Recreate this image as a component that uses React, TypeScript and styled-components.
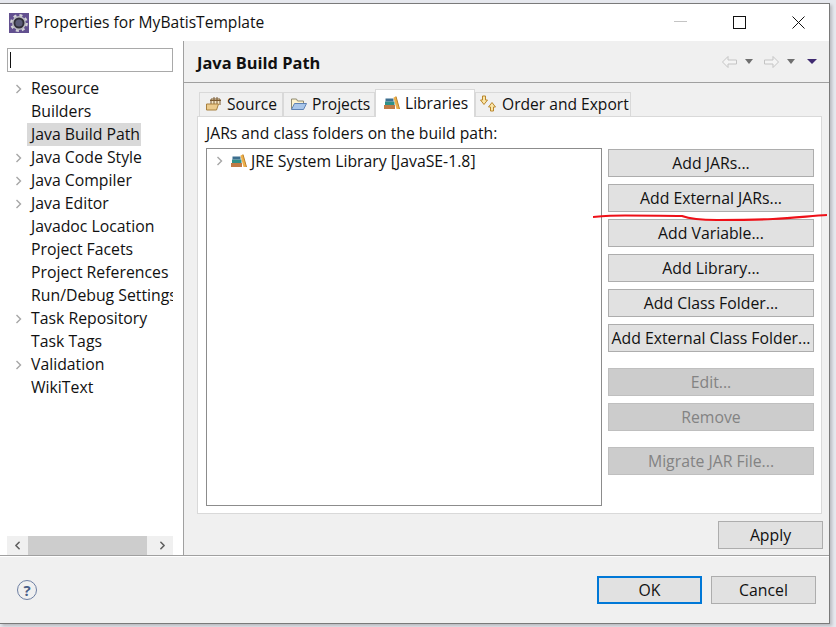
import React from 'react';
import styled, { createGlobalStyle } from 'styled-components';
import { ChevronLeft, ChevronRight } from 'lucide-react';

const treeItems = [
  { label: 'Resource', arrow: true },
  { label: 'Builders', arrow: false },
  { label: 'Java Build Path', arrow: false, selected: true },
  { label: 'Java Code Style', arrow: true },
  { label: 'Java Compiler', arrow: true },
  { label: 'Java Editor', arrow: true },
  { label: 'Javadoc Location', arrow: false },
  { label: 'Project Facets', arrow: false },
  { label: 'Project References', arrow: false },
  { label: 'Run/Debug Settings', arrow: false },
  { label: 'Task Repository', arrow: true },
  { label: 'Task Tags', arrow: false },
  { label: 'Validation', arrow: true },
  { label: 'WikiText', arrow: false },
];

const Arrow = () => (
  <svg width="7" height="10" viewBox="0 0 7 10">
    <path d="M1.5 1l4 4-4 4" fill="none" stroke="#a6a6a6" strokeWidth="1.4" />
  </svg>
);

const LibraryIcon = () => (
  <svg width="16" height="14" viewBox="0 0 16 14">
    <rect x="0" y="9" width="11" height="4" fill="#c07a45" />
    <rect x="1" y="5.5" width="9.5" height="3.5" fill="#2f9088" />
    <rect x="1.5" y="2.5" width="8" height="3" fill="#3d6f8f" />
    <path d="M9.5 1.5L12 .5l3.5 12.5h-3z" fill="#eeb04a" />
    <path d="M12 .5l3.5 12.5" stroke="#b97f2a" fill="none" />
  </svg>
);

const SourceIcon = () => (
  <svg width="16" height="15" viewBox="0 0 16 15">
    <path d="M5 8V3h9v6" fill="#f6e7c8" stroke="#7a5a30" />
    <path d="M8 1v7M11 1v7M4 4.5h11" stroke="#7a5a30" fill="none" />
    <path d="M.5 8h12l-2 6H.5z" fill="#eccb8c" stroke="#a8803f" />
  </svg>
);

const FolderIcon = () => (
  <svg width="16" height="14" viewBox="0 0 16 14">
    <path d="M.5 12V2h5l1 2h6v2" fill="#fdf3cf" stroke="#8f8a70" />
    <path d="M.5 12.5l3-6h12l-3 6z" fill="#a9c6ea" stroke="#5f83b5" />
  </svg>
);

const OrderIcon = () => (
  <svg width="17" height="17" viewBox="0 0 17 17">
    <path d="M2.5 1h3v4h2l-3.5 4.5L.5 5h2z" fill="#fbe6a8" stroke="#b9862c" />
    <path d="M10.5 16v-4h-2L12 7.5l3.5 4.5h-2v4z" fill="#fbe6a8" stroke="#b9862c" />
  </svg>
);

const GearIcon = () => (
  <svg width="20" height="20" viewBox="0 0 20 20">
    <rect width="20" height="20" fill="#62508f" />
    <circle cx="10" cy="10" r="7.6" fill="none" stroke="#d2d2d6" strokeWidth="2.6" strokeDasharray="3 3" />
    <circle cx="10" cy="10" r="6.2" fill="#2f2e38" stroke="#b9b9c0" strokeWidth="1.4" />
    <circle cx="10" cy="10" r="3.6" fill="#5b5c78" />
  </svg>
);

const NavArrow = ({ flip }: { flip?: boolean }) => (
  <svg width="15" height="12" viewBox="0 0 15 12" style={flip ? { transform: 'scaleX(-1)' } : undefined}>
    <path d="M.5 6l5.5-5.5v3.5h8.500v4H6v3.500z" fill="#f4f4f4" stroke="#c4c4c4" />
  </svg>
);

const App = () => (
  <>
    <GlobalStyle />
    <Dialog>
      <TitleBar>
        <GearIcon />
        <TitleText>Properties for MyBatisTemplate</TitleText>
        <WindowButtons>
          <svg width="13" height="13" viewBox="0 0 13 13">
            <path d="M0 5.5h13" stroke="#c4c4c4" />
          </svg>
          <svg width="13" height="13" viewBox="0 0 13 13">
            <rect x="0.5" y="0.5" width="12" height="12" fill="none" stroke="#111" />
          </svg>
          <svg width="13" height="13" viewBox="0 0 13 13">
            <path d="M0.5 0.5l12 12M12.5 0.5l-12 12" stroke="#111" />
          </svg>
        </WindowButtons>
      </TitleBar>

      <Body>
        <Sidebar>
          <FilterInput>
            <Caret />
          </FilterInput>
          <Tree>
            {treeItems.map((item) => (
              <TreeRow key={item.label}>
                <ArrowSlot>{item.arrow && <Arrow />}</ArrowSlot>
                <TreeLabel $selected={item.selected}>{item.label}</TreeLabel>
              </TreeRow>
            ))}
          </Tree>
          <ScrollBar>
            <ScrollEnd>
              <ChevronLeft size={13} strokeWidth={3} color="#606060" />
            </ScrollEnd>
            <ScrollThumb />
            <ScrollEnd>
              <ChevronRight size={13} strokeWidth={3} color="#606060" />
            </ScrollEnd>
          </ScrollBar>
        </Sidebar>

        <Main>
          <MainHeader>
            <MainTitle>Java Build Path</MainTitle>
            <NavGroup>
              <NavArrow />
              <DropArrow />
              <NavArrow flip />
              <DropArrow />
              <DropArrow $purple />
            </NavGroup>
          </MainHeader>

          <MainContent>
            <TabBar>
              <Tab $width={84} $left={6}>
                <SourceIcon />
                Source
              </Tab>
              <Tab $width={92} $left={7}>
                <FolderIcon />
                Projects
              </Tab>
              <Tab $width={100} $left={8} $active>
                <LibraryIcon />
                Libraries
              </Tab>
              <Tab $width={156} $left={4}>
                <OrderIcon />
                Order and Export
              </Tab>
            </TabBar>
            <TabPanel>
              <PanelLabel>JARs and class folders on the build path:</PanelLabel>
              <PanelRow>
                <LibraryList>
                  <ListRow>
                    <Arrow />
                    <LibraryIcon />
                    <span>JRE System Library [JavaSE-1.8]</span>
                  </ListRow>
                </LibraryList>
                <ButtonColumn>
                  <ActionButton>Add JARs...</ActionButton>
                  <ActionButton>Add External JARs...</ActionButton>
                  <ActionButton>Add Variable...</ActionButton>
                  <ActionButton>Add Library...</ActionButton>
                  <ActionButton>Add Class Folder...</ActionButton>
                  <ActionButton>Add External Class Folder...</ActionButton>
                  <ActionButton $disabled $gapTop={9}>Edit...</ActionButton>
                  <ActionButton $disabled>Remove</ActionButton>
                  <ActionButton $disabled $gapTop={9}>Migrate JAR File...</ActionButton>
                </ButtonColumn>
              </PanelRow>
            </TabPanel>
            <ApplyRow>
              <DialogButton>Apply</DialogButton>
            </ApplyRow>
          </MainContent>
        </Main>
      </Body>

      <Footer>
        <HelpIcon>?</HelpIcon>
        <FooterButtons>
          <DialogButton $primary>OK</DialogButton>
          <DialogButton>Cancel</DialogButton>
        </FooterButtons>
      </Footer>

      <RedMark viewBox="0 0 240 14" width="240" height="14">
        <path
          d="M0 8C12 7 22 6.5 32 6.5c20 0 40 0 57 .5 8 3 20 4 35 4 20 0 38 0 56-1 20-1 38-3 54-4"
          fill="none"
          stroke="#ee1018"
          strokeWidth="2.2"
        />
      </RedMark>
    </Dialog>
  </>
);

export default App;

const GlobalStyle = createGlobalStyle`
  html, body {
    margin: 0;
    padding: 0;
    background: #e6e8ee;
  }
  body {
    width: 836px;
    height: 627px;
    overflow: hidden;
    font-family: 'Open Sans', 'Noto Sans', sans-serif;
    color: #111;
  }
`;

const Dialog = styled.div`
  position: relative;
  box-sizing: border-box;
  width: 830px;
  height: 621px;
  margin-top: 3px;
  display: flex;
  flex-direction: column;
  background: #f0f0f0;
  border: 1px solid #7a7a7a;
  border-left: none;
  box-shadow: 2px 2px 3px rgba(0, 0, 0, 0.2);
`;

const TitleBar = styled.div`
  height: 37px;
  flex: none;
  display: flex;
  align-items: center;
  padding: 0 24px 0 9px;
  background: #fff;
`;

const TitleText = styled.div`
  margin: 0 0 2px 5px;
  font-size: 15.6px;
`;

const WindowButtons = styled.div`
  margin-left: auto;
  display: flex;
  gap: 46px;
`;

const Body = styled.div`
  height: 515px;
  flex: none;
  display: flex;
  border-bottom: 1px solid #a0a0a0;
  box-sizing: border-box;
`;

const Sidebar = styled.div`
  width: 184px;
  flex: none;
  box-sizing: border-box;
  display: flex;
  flex-direction: column;
  padding: 7px 10px 0 7px;
  background: #fff;
  border-right: 1px solid #a0a0a0;
`;

const FilterInput = styled.div`
  height: 24px;
  flex: none;
  box-sizing: border-box;
  padding: 3px 2px;
  background: #fff;
  border: 1px solid #a9a9a9;
`;

const Caret = styled.div`
  width: 1px;
  height: 100%;
  background: #111;
`;

const Tree = styled.div`
  flex: 1;
  min-height: 0;
  padding-top: 5px;
  overflow: hidden;
`;

const TreeRow = styled.div`
  height: 23px;
  display: flex;
  align-items: center;
  white-space: nowrap;
`;

const ArrowSlot = styled.div`
  width: 20px;
  flex: none;
  display: flex;
  justify-content: center;
  padding-right: 4px;
  box-sizing: border-box;
  padding-left: 6px;
`;

const TreeLabel = styled.div<{ $selected?: boolean }>`
  font-size: 15.8px;
  padding: 0 1px 0 4px;
  line-height: 23px;
  background: ${(p) => (p.$selected ? '#d9d9d9' : 'transparent')};
`;

const ScrollBar = styled.div`
  height: 19px;
  flex: none;
  display: flex;
  background: #f0f0f0;
`;

const ScrollEnd = styled.div`
  width: 21px;
  flex: none;
  display: flex;
  align-items: center;
  justify-content: center;
`;

const ScrollThumb = styled.div`
  width: 119px;
  flex: none;
  margin-right: auto;
  background: #cdcdcd;
`;

const Main = styled.div`
  flex: 1;
  min-width: 0;
  display: flex;
  flex-direction: column;
`;

const MainHeader = styled.div`
  height: 42px;
  flex: none;
  box-sizing: border-box;
  display: flex;
  align-items: center;
  justify-content: space-between;
  padding: 0 10px 0 13px;
  border-bottom: 1px solid #a0a0a0;
`;

const MainTitle = styled.div`
  margin-top: 2px;
  font-size: 16.4px;
  font-weight: 700;
`;

const NavGroup = styled.div`
  display: flex;
  align-items: center;
  gap: 8px;
`;

const DropArrow = styled.div<{ $purple?: boolean }>`
  width: 0;
  height: 0;
  margin-right: ${(p) => (p.$purple ? '2px' : '3px')};
  margin-left: ${(p) => (p.$purple ? '1px' : '0')};
  border-left: ${(p) => (p.$purple ? '5px' : '4.5px')} solid transparent;
  border-right: ${(p) => (p.$purple ? '5px' : '4.5px')} solid transparent;
  border-top: 5px solid ${(p) => (p.$purple ? '#3f2a70' : '#6f6f6f')};
`;

const MainContent = styled.div`
  flex: 1;
  display: flex;
  flex-direction: column;
  min-height: 0;
  padding: 6px 7px 6px 13px;
`;

const TabBar = styled.div`
  height: 27px;
  flex: none;
  display: flex;
  align-items: flex-end;
  padding-left: 2px;
`;

const Tab = styled.div<{ $active?: boolean; $width: number; $left: number }>`
  position: relative;
  box-sizing: border-box;
  width: ${(p) => p.$width}px;
  height: ${(p) => (p.$active ? '28px' : '24px')};
  flex: none;
  display: flex;
  align-items: center;
  gap: 5px;
  padding-left: ${(p) => p.$left}px;
  padding-bottom: 2px;
  margin-bottom: ${(p) => (p.$active ? '-1px' : '0')};
  font-size: 15.6px;
  white-space: nowrap;
  background: ${(p) => (p.$active ? '#fff' : '#f0f0f0')};
  border: 1px solid #d9d9d9;
  border-bottom: none;
`;

const TabPanel = styled.div`
  flex: 1;
  min-height: 0;
  box-sizing: border-box;
  display: flex;
  flex-direction: column;
  padding: 6px 7px 7px 8px;
  background: #fff;
  border: 1px solid #d9d9d9;
`;

const PanelLabel = styled.div`
  font-size: 15.7px;
  line-height: 20px;
  height: 24px;
  flex: none;
  white-space: nowrap;
`;

const PanelRow = styled.div`
  flex: 1;
  min-height: 0;
  display: flex;
  gap: 6px;
  margin-top: 1px;
`;

const LibraryList = styled.div`
  width: 396px;
  flex: none;
  box-sizing: border-box;
  padding: 1px 0 0 9px;
  border: 1px solid #8c8c8c;
`;

const ListRow = styled.div`
  display: grid;
  grid-template-columns: 15px 20px auto;
  align-items: center;
  font-size: 15.8px;
  line-height: 22px;
  white-space: nowrap;
`;

const ButtonColumn = styled.div`
  flex: 1;
  display: flex;
  flex-direction: column;
  gap: 7px;
  padding-top: 1px;
`;

const ActionButton = styled.div<{ $disabled?: boolean; $gapTop?: number }>`
  box-sizing: border-box;
  height: 28px;
  flex: none;
  display: flex;
  align-items: center;
  justify-content: center;
  font-size: 15.8px;
  white-space: nowrap;
  margin-top: ${(p) => p.$gapTop ?? 0}px;
  color: ${(p) => (p.$disabled ? '#838383' : '#111')};
  background: ${(p) => (p.$disabled ? '#cccccc' : '#e1e1e1')};
  border: 1px solid ${(p) => (p.$disabled ? '#bfbfbf' : '#adadad')};
`;

const ApplyRow = styled.div`
  height: 35px;
  flex: none;
  display: flex;
  align-items: flex-end;
  justify-content: flex-end;
  margin-right: -1px;
`;

const DialogButton = styled.div<{ $primary?: boolean }>`
  box-sizing: border-box;
  width: 105px;
  height: 28px;
  display: flex;
  align-items: center;
  justify-content: center;
  font-size: 15.8px;
  background: #e1e1e1;
  border: ${(p) => (p.$primary ? '2px solid #0078d7' : '1px solid #adadad')};
`;

const Footer = styled.div`
  height: 67px;
  flex: none;
  box-sizing: border-box;
  display: flex;
  align-items: center;
  justify-content: space-between;
  padding: 0 13px 0 17px;
  border-top: 1px solid #fff;
`;

const HelpIcon = styled.div`
  box-sizing: border-box;
  width: 20px;
  height: 20px;
  border-radius: 50%;
  display: flex;
  align-items: center;
  justify-content: center;
  font-size: 15px;
  font-weight: 700;
  color: #4a5f88;
  border: 1.5px solid #6d7fa3;
`;

const FooterButtons = styled.div`
  display: flex;
  gap: 9px;
`;

const RedMark = styled.svg`
  position: absolute;
  left: 593px;
  top: 205px;
`;
